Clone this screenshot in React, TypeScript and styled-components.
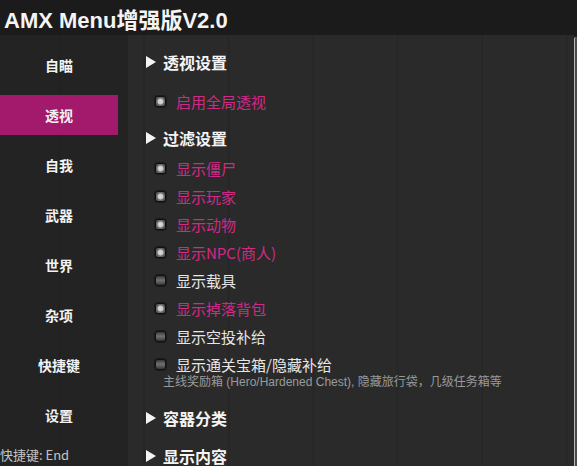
import React from "react";
import styled, { createGlobalStyle } from "styled-components";

const GlobalStyle = createGlobalStyle`
  html, body {
    margin: 0;
    padding: 0;
    background: #1c1c1c;
  }
  body {
    font-family: "Liberation Sans", "Noto Sans CJK SC", sans-serif;
    overflow: hidden;
  }
`;

// faint tile grid that runs under both panels; fixed so the lines line up
const grid = `
  linear-gradient(90deg, transparent 59px, rgba(0, 0, 0, 0.09) 59px, rgba(0, 0, 0, 0.09) 61px, transparent 61px),
  linear-gradient(180deg, transparent 100px, rgba(0, 0, 0, 0.09) 100px, rgba(0, 0, 0, 0.09) 102px, transparent 102px)
`;

const Window = styled.div`
  width: 577px;
  height: 466px;
  display: flex;
  flex-direction: column;
  background: #1c1c1c;
  overflow: hidden;
`;

const TitleBar = styled.div`
  height: 35px;
  flex-shrink: 0;
  display: flex;
  align-items: center;
  padding-left: 4px;
  background: #1b1b1b;
  color: #f4f4f4;
  font-family: "Liberation Sans", "Noto Sans CJK SC", sans-serif;
  font-weight: 700;
  font-size: 22px;
`;

const Body = styled.div`
  flex: 1;
  display: flex;
  min-height: 0;
`;

const Sidebar = styled.nav`
  width: 128px;
  flex-shrink: 0;
  display: flex;
  flex-direction: column;
  padding-top: 10px;
  box-sizing: border-box;
  background: ${grid}, #232323;
  background-size: 84.5px 84.5px;
  background-attachment: fixed;
`;

const NavList = styled.div`
  display: flex;
  flex-direction: column;
  gap: 10px;
  flex: 1;
`;

const NavItem = styled.div<{ $active?: boolean }>`
  width: 118px;
  height: 40px;
  display: flex;
  align-items: center;
  justify-content: center;
  font-family: "Noto Sans CJK SC", sans-serif;
  font-weight: 700;
  font-size: 14px;
  color: #f2f2f2;
  background: ${(p) => (p.$active ? "#a3196b" : "transparent")};
`;

const Hotkey = styled.div`
  height: 24px;
  display: flex;
  align-items: center;
  font-family: "Noto Sans CJK SC", "Liberation Sans", sans-serif;
  font-size: 13px;
  color: #c4c4c4;
  white-space: nowrap;
`;

const Content = styled.main`
  flex: 1;
  display: flex;
  flex-direction: column;
  padding-top: 15px;
  background: ${grid}, #2a2a2a;
  background-size: 84.5px 84.5px;
  background-attachment: fixed;
`;

const Scrollbar = styled.div`
  width: 2px;
  margin-top: 2px;
  flex-shrink: 0;
  background: #4a4a4a;
  border-left: 1px solid #b8b8b8;
  border-top-left-radius: 2px;
`;

const Heading = styled.div<{ $gap?: number }>`
  height: 26px;
  display: flex;
  align-items: center;
  gap: 7px;
  padding-left: 18px;
  margin-top: ${(p) => p.$gap ?? 0}px;
  color: #f4f4f4;
  font-family: "Noto Sans CJK SC", sans-serif;
  font-weight: 700;
  font-size: 16px;
`;

const Arrow = styled.span`
  width: 0;
  height: 0;
  border-top: 6px solid transparent;
  border-bottom: 6px solid transparent;
  border-left: 10px solid #f4f4f4;
`;

const Items = styled.div<{ $top: number }>`
  display: flex;
  flex-direction: column;
  padding-top: ${(p) => p.$top}px;
`;

const Item = styled.label<{ $on?: boolean }>`
  height: 28px;
  display: flex;
  align-items: center;
  gap: 10px;
  padding-left: 27px;
  font-family: "Noto Sans CJK SC", "Liberation Sans", sans-serif;
  font-size: 15px;
  color: ${(p) => (p.$on ? "#cf2a88" : "#e6e6e6")};
`;

const Box = styled.span<{ $on?: boolean }>`
  width: 11px;
  height: 11px;
  box-sizing: border-box;
  border-radius: 3px;
  border: 1px solid #111;
  background: ${(p) =>
    p.$on
      ? "radial-gradient(circle at 50% 50%, #dcdcdc 0, #c8c8c8 2.5px, #6a6a6a 3.5px, #555 100%)"
      : "linear-gradient(180deg, #3a3a3a 0%, #6e6e6e 45%, #6a6a6a 55%, #353535 100%)"};
  box-shadow: 0 0 0 1px rgba(0, 0, 0, 0.35);
`;

const Note = styled.div`
  height: 16px;
  margin-top: -6px;
  padding-left: 35px;
  display: flex;
  align-items: center;
  font-family: "Liberation Sans", "Noto Sans CJK SC", sans-serif;
  font-size: 12px;
  color: #9a9a9a;
  white-space: nowrap;
`;

const nav = ["自瞄", "透视", "自我", "武器", "世界", "杂项", "快捷键", "设置"];

const filters: { label: string; on: boolean }[] = [
  { label: "显示僵尸", on: true },
  { label: "显示玩家", on: true },
  { label: "显示动物", on: true },
  { label: "显示NPC(商人)", on: true },
  { label: "显示载具", on: false },
  { label: "显示掉落背包", on: true },
  { label: "显示空投补给", on: false },
  { label: "显示通关宝箱/隐藏补给", on: false },
];

const App = () => {
  return (
    <>
      <GlobalStyle />
      <Window>
        <TitleBar>AMX Menu增强版V2.0</TitleBar>
        <Body>
          <Sidebar>
            <NavList>
              {nav.map((n) => (
                <NavItem key={n} $active={n === "透视"}>
                  {n}
                </NavItem>
              ))}
            </NavList>
            <Hotkey>快捷键: End</Hotkey>
          </Sidebar>
          <Content>
            <Heading>
              <Arrow />
              透视设置
            </Heading>
            <Items $top={13}>
              <Item $on>
                <Box $on />
                启用全局透视
              </Item>
            </Items>
            <Heading $gap={11}>
              <Arrow />
              过滤设置
            </Heading>
            <Items $top={4}>
              {filters.map((f) => (
                <Item key={f.label} $on={f.on}>
                  <Box $on={f.on} />
                  {f.label}
                </Item>
              ))}
              <Note>主线奖励箱 (Hero/Hardened Chest), 隐藏旅行袋，几级任务箱等</Note>
            </Items>
            <Heading $gap={18}>
              <Arrow />
              容器分类
            </Heading>
            <Heading $gap={14}>
              <Arrow />
              显示内容
            </Heading>
          </Content>
          <Scrollbar />
        </Body>
      </Window>
    </>
  );
};

export default App;
